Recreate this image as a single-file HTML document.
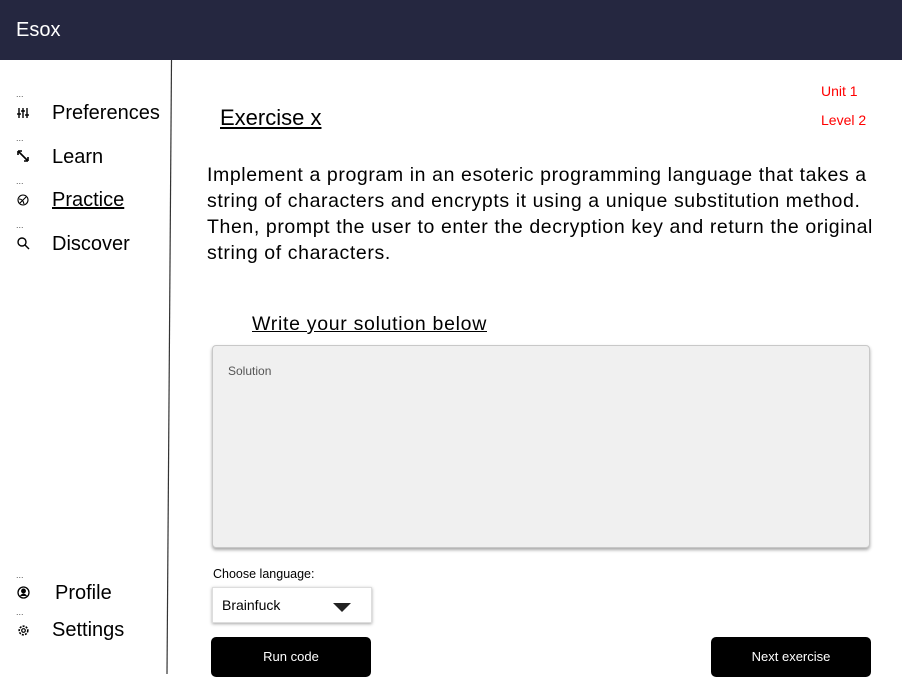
<!DOCTYPE html>
<html><head><meta charset="utf-8"><style>
body{margin:0;width:902px;height:674px;position:relative;overflow:hidden;background:#fff;font-family:"Liberation Sans",Arial,sans-serif;color:#000}
.a{position:absolute;white-space:nowrap}
.dots{position:absolute;font-size:9px;color:#555;letter-spacing:0px;line-height:6px}
.nav{font-size:20px}
.ic{position:absolute}
</style></head><body>
<div class="a" style="left:0;top:0;width:902px;height:60px;background:#252740"></div>
<div class="a" style="left:16px;top:19px;color:#fff;font-size:20px">Esox</div>
<svg class="a" style="left:0;top:60px" width="180" height="614"><line x1="171.5" y1="0" x2="167" y2="614" stroke="#333" stroke-width="1.2"/></svg>

<div class="dots" style="left:16px;top:91px">...</div>
<div class="dots" style="left:16px;top:135px">...</div>
<div class="dots" style="left:16px;top:178px">...</div>
<div class="dots" style="left:16px;top:222px">...</div>
<div class="dots" style="left:16px;top:572px">...</div>
<div class="dots" style="left:16px;top:609px">...</div>

<svg class="ic" style="left:17px;top:108px" width="12" height="10" stroke="#000" stroke-width="1.4"><line x1="2" y1="0" x2="2" y2="10"/><line x1="6" y1="0" x2="6" y2="10"/><line x1="10" y1="0" x2="10" y2="10"/><line x1="0" y1="6" x2="4" y2="6"/><line x1="4" y1="3" x2="8" y2="3"/><line x1="8" y1="7" x2="12" y2="7"/></svg>
<svg class="ic" style="left:17px;top:150px" width="12" height="12" stroke="#000" stroke-width="1.6" fill="none"><path d="M2 2 L10 10 M1 1 v4 M1 1 h4 M11 11 v-4 M11 11 h-4"/></svg>
<svg class="ic" style="left:17px;top:194px" width="12" height="12" stroke="#000" stroke-width="1.1" fill="none"><circle cx="6" cy="6" r="5"/><path d="M3 9 L9 3 M2 5 Q6 5 7 10"/></svg>
<svg class="ic" style="left:17px;top:237px" width="13" height="13" stroke="#000" stroke-width="1.4" fill="none"><circle cx="5" cy="5" r="4"/><line x1="8" y1="8" x2="12" y2="12"/></svg>
<svg class="ic" style="left:17px;top:586px" width="13" height="13" stroke="#000" stroke-width="1.3" fill="none"><circle cx="6.5" cy="6.5" r="5.5"/><circle cx="6.5" cy="5" r="1.8" fill="#000"/><path d="M3.5 10 Q6.5 6.5 9.5 10" fill="#000"/></svg>
<svg class="ic" style="left:17px;top:624px" width="13" height="13" stroke="#000" stroke-width="1.6" fill="none"><circle cx="6.5" cy="6.5" r="4.3" stroke-dasharray="2 1.2"/><circle cx="6.5" cy="6.5" r="1.8" stroke-width="1.2"/></svg>

<div class="a nav" style="left:52px;top:102px">Preferences</div>
<div class="a nav" style="left:52px;top:146px">Learn</div>
<div class="a nav" style="left:52px;top:189px;text-decoration:underline">Practice</div>
<div class="a nav" style="left:52px;top:233px">Discover</div>
<div class="a nav" style="left:55px;top:582px">Profile</div>
<div class="a nav" style="left:52px;top:619px">Settings</div>

<div class="a" style="left:821px;top:83px;color:#f00;font-size:14px">Unit 1</div>
<div class="a" style="left:821px;top:112px;color:#f00;font-size:14px">Level 2</div>
<div class="a" style="left:220px;top:105px;font-size:22px;text-decoration:underline">Exercise x</div>
<div class="a" style="left:207px;top:162px;font-size:19.5px;line-height:26px;white-space:normal;width:675px;letter-spacing:0.6px">Implement a program in an esoteric programming language that takes a string of characters and encrypts it using a unique substitution method. Then, prompt the user to enter the decryption key and return the original string of characters.</div>
<div class="a" style="left:252px;top:313px;font-size:19.5px;text-decoration:underline;letter-spacing:0.7px">Write your solution below</div>
<div class="a" style="left:212px;top:345px;width:656px;height:201px;background:#f0f0f0;border:1px solid #c8c8c8;border-radius:4px;box-shadow:0 2px 3px rgba(0,0,0,.35)"></div>
<div class="a" style="left:228px;top:364px;font-size:12px;color:#555">Solution</div>
<div class="a" style="left:213px;top:567px;font-size:12.5px">Choose language:</div>
<div class="a" style="left:212px;top:587px;width:158px;height:34px;background:#fff;border:1px solid #ddd;box-shadow:0 1px 3px rgba(0,0,0,.35)"></div>
<div class="a" style="left:222px;top:597px;font-size:14px">Brainfuck</div>
<svg class="a" style="left:333px;top:603px" width="18" height="9"><path d="M0 0 H18 L9 9Z" fill="#222"/></svg>
<div class="a" style="left:211px;top:637px;width:160px;height:40px;background:#000;border-radius:5px;color:#fff;font-size:13px;text-align:center;line-height:40px">Run code</div>
<div class="a" style="left:711px;top:637px;width:160px;height:40px;background:#000;border-radius:5px;color:#fff;font-size:13px;text-align:center;line-height:40px">Next exercise</div>
</body></html>
